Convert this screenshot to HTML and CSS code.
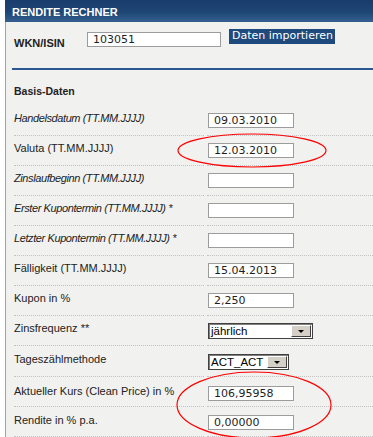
FILE: index.html
```html
<!DOCTYPE html>
<html lang="de">
<head>
<meta charset="utf-8">
<title>Rendite Rechner</title>
<link rel="stylesheet" href="styles.css">
</head>
<body>
<div class="calc">
  <div class="calc-header">RENDITE RECHNER</div>
  <div class="wkn-row">
    <div class="wkn-label">WKN/ISIN</div>
    <div class="field wkn-field">103051</div>
    <div class="import-btn">Daten importieren</div>
  </div>
  <div class="divider"></div>
  <div class="section-title">Basis-Daten</div>

  <div class="row">
    <div class="cell label italic">Handelsdatum (TT.MM.JJJJ)</div>
    <div class="cell value"><div class="field">09.03.2010</div></div>
  </div>
  <div class="row">
    <div class="cell label">Valuta (TT.MM.JJJJ)</div>
    <div class="cell value"><div class="field">12.03.2010</div></div>
  </div>
  <div class="row">
    <div class="cell label italic">Zinslaufbeginn (TT.MM.JJJJ)</div>
    <div class="cell value"><div class="field"></div></div>
  </div>
  <div class="row">
    <div class="cell label italic">Erster Kupontermin (TT.MM.JJJJ) *</div>
    <div class="cell value"><div class="field"></div></div>
  </div>
  <div class="row">
    <div class="cell label italic">Letzter Kupontermin (TT.MM.JJJJ) *</div>
    <div class="cell value"><div class="field"></div></div>
  </div>
  <div class="row">
    <div class="cell label">Fälligkeit (TT.MM.JJJJ)</div>
    <div class="cell value"><div class="field">15.04.2013</div></div>
  </div>
  <div class="row">
    <div class="cell label">Kupon in %</div>
    <div class="cell value"><div class="field">2,250</div></div>
  </div>
  <div class="row">
    <div class="cell label">Zinsfrequenz **</div>
    <div class="cell value">
      <div class="select select-wide"><span class="select-text">jährlich</span><span class="select-btn"><span class="arrow"></span></span></div>
    </div>
  </div>
  <div class="row row-day">
    <div class="cell label">Tageszählmethode</div>
    <div class="cell value">
      <div class="select select-narrow"><span class="select-text">ACT_ACT</span><span class="select-btn"><span class="arrow"></span></span></div>
    </div>
  </div>
  <div class="row row-price">
    <div class="cell label">Aktueller Kurs (Clean Price) in %</div>
    <div class="cell value"><div class="field">106,95958</div></div>
  </div>
  <div class="row row-yield">
    <div class="cell label">Rendite in % p.a.</div>
    <div class="cell value"><div class="field">0,00000</div></div>
  </div>

  <svg class="annotations" width="373" height="437" viewBox="0 0 373 437">
    <ellipse cx="252" cy="150.5" rx="74" ry="16.5" fill="none" stroke="#ff0000" stroke-width="1.2"/>
    <ellipse cx="254" cy="405" rx="77" ry="33" fill="none" stroke="#ff0000" stroke-width="1.2"/>
  </svg>
</div>
</body>
</html>
```

FILE: styles.css
```css
* {
  box-sizing: border-box;
}

html,
body {
  margin: 0;
  padding: 0;
  background: #ffffff;
}

body {
  font-family: "Liberation Sans", Arial, sans-serif;
  font-size: 11px;
  color: #222222;
  overflow: hidden;
}

.calc {
  position: relative;
  margin-left: 5px;
  border-left: 1px solid #a3a3a3;
  background: #f1f1ef;
  min-height: 437px;
}

.calc-header {
  height: 22px;
  margin-left: -1px;
  padding: 2px 0 0 7px;
  line-height: 20px;
  font-weight: bold;
  font-size: 11px;
  color: #ffffff;
  background: linear-gradient(to bottom, #1a3c6b 0%, #1e4675 55%, #355f90 100%);
}

.wkn-row {
  display: flex;
  align-items: flex-start;
  height: 46px;
  padding: 10px 0 0 8px;
}

.wkn-label {
  width: 73px;
  padding-top: 5px;
  line-height: 13px;
  font-weight: bold;
}

.field {
  height: 15px;
  width: 86px;
  border: 1px solid #9c9c9c;
  background: #ffffff;
  padding-left: 5px;
  font-family: "DejaVu Sans", Verdana, sans-serif;
  font-size: 11px;
  line-height: 13px;
  color: #1e1e1e;
  white-space: nowrap;
}

.wkn-field {
  width: 134px;
}

.import-btn {
  margin: -3px 0 0 8px;
  height: 15px;
  padding: 0 2px 0 3px;
  background: #1e4a7e;
  color: #ffffff;
  font-family: "DejaVu Sans", Verdana, sans-serif;
  font-size: 11px;
  line-height: 14px;
  white-space: nowrap;
}

.divider {
  height: 2px;
  margin-left: 6px;
  background: #2b5891;
}

.section-title {
  margin: 15px 0 8px 8px;
  font-weight: bold;
  font-size: 10.5px;
  line-height: 13px;
}

.row {
  display: grid;
  grid-template-columns: 190px 1fr;
  column-gap: 3px;
  margin-left: 8px;
  height: 30px;
}

.cell {
  border-bottom: 1px dotted #c2c2c2;
}

.label {
  padding-top: 6px;
  line-height: 13px;
  white-space: nowrap;
}

.italic {
  font-style: italic;
  letter-spacing: -0.4px;
}

.value {
  padding: 7px 0 0 1px;
}

.row-day {
  height: 31px;
}

.row-day .label {
  padding-top: 7px;
}

.row-day .value {
  padding-top: 8px;
}

.row-price .label {
  padding-top: 8px;
}

.row-price .value {
  padding-top: 9px;
}

.row-yield .label {
  padding-top: 7px;
}

.row-yield .value {
  padding-top: 8px;
}

.select {
  display: flex;
  align-items: stretch;
  height: 16px;
  border: 1px solid #404040;
  box-shadow: inset 1px 1px 0 #808080;
  background: #ffffff;
  font-family: "Liberation Sans", Arial, sans-serif;
  font-size: 11.5px;
  color: #000000;
}

.select-wide {
  width: 105px;
}

.select-narrow {
  width: 81px;
}

.select-text {
  flex: 1;
  padding: 0 0 0 2px;
  line-height: 14px;
  white-space: nowrap;
}

.select-btn {
  display: flex;
  align-items: center;
  justify-content: center;
  flex: 0 0 20px;
  margin: 1px 1px 1px 0;
  background: #d4d0c8;
  border: 1px solid;
  border-color: #ffffff #404040 #404040 #ffffff;
}

.arrow {
  width: 0;
  height: 0;
  border-left: 3px solid transparent;
  border-right: 3px solid transparent;
  border-top: 3px solid #000000;
  margin-top: 1px;
}

.annotations {
  position: absolute;
  left: -6px;
  top: 0;
  pointer-events: none;
}
```
